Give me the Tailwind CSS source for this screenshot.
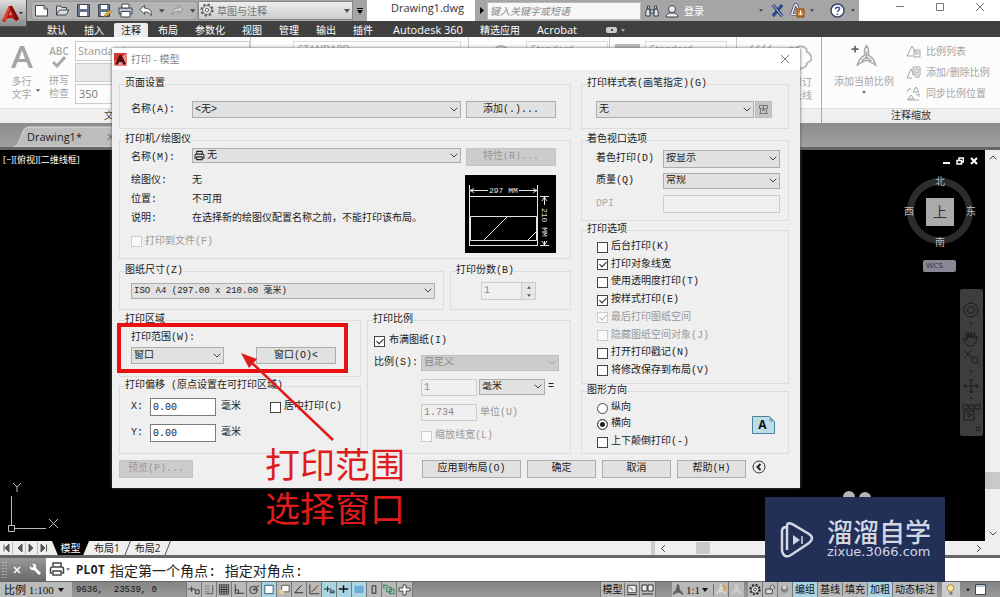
<!DOCTYPE html>
<html lang="zh-CN">
<head>
<meta charset="utf-8">
<title>Drawing1.dwg</title>
<script src="https://cdn.jsdelivr.net/npm/@tailwindcss/browser@4"></script>
</head>
<body class="font-['Open_Sans','Noto_Sans_CJK_SC',sans-serif] text-[10px] leading-3 text-[#222]">
<svg class="hidden" aria-hidden="true">
  <symbol id="chev" viewBox="0 0 8 5"><path d="M.7.7 4 4 7.3.7" fill="none" stroke="currentColor"/></symbol>
  <symbol id="down" viewBox="0 0 6 4"><path d="M0 0h6L3 4z" fill="currentColor"/></symbol>
  <symbol id="printer" viewBox="0 0 16 16"><path d="M4 6V2h8v4M3 12H1.500V8Q1.500 6 3.500 6h9q2 0 2 2v4H13M4 10h8v4H4z" fill="none" stroke="currentColor" stroke-width="1.500"/></symbol>
  <symbol id="compass" viewBox="0 0 40 40"><path d="M20 2c5 6 3 10 3 16 6 3 10 8 12 16-5-3-9-7-15-8-6 1-10 5-15 8 2-8 6-13 12-16 0-6-2-10 3-16zM20 12v9l-8 6M20 21l8 6" fill="none" stroke="currentColor" stroke-width="2.500"/></symbol>
  <symbol id="gear" viewBox="0 0 16 16"><circle cx="8" cy="8" r="6.500" fill="none" stroke="currentColor" stroke-width="2" stroke-dasharray="2.600 2.500"/><circle cx="8" cy="8" r="5" fill="#eee" stroke="currentColor"/><circle cx="8" cy="8" r="2" fill="none" stroke="currentColor"/></symbol>
</svg>

<main class="relative flex min-h-screen flex-col overflow-hidden bg-[#a9a9a9]">
  <!-- Quick access and title bar -->
  <header class="flex h-[21px] items-center bg-[#a5a5a5]">
    <button aria-label="应用程序菜单" class="absolute left-0 top-0 z-10 flex h-[27px] w-[27px] items-center border-r border-b border-[#555] bg-linear-to-b from-[#ddd] to-[#8c8c8c] pl-0.5">
      <svg class="h-[19px] w-[17px]" viewBox="0 0 17 19"><path d="M0 17 7 2h3l7 13-3 2-4-3-5 .5L3 18z" fill="#b5140c"/><path d="M8 2h2l7 13-3 2z" fill="#7d0c08"/><path d="M0 17 7 2l1 3-4 11z" fill="#e0402c"/><path d="m8.500 7 1.500 4-3 .5z" fill="#c98a80"/></svg>
      <svg class="h-1 w-1" viewBox="0 0 6 4"><use href="#down"/></svg>
    </button>
    <div class="ml-[31px] flex h-[19px] w-[167px] items-center gap-[6px] rounded border border-[#999] bg-[#b5b5b5] px-0.5 text-[#3d4654]">
      <button aria-label="新建"><svg class="block size-[15px]" viewBox="0 0 15 15"><path d="M1.500 2.500H10L13.500 6v7h-12z" fill="#fff" stroke="currentColor"/><path d="M10 2.500V6h3.500" fill="none" stroke="currentColor"/></svg></button>
      <button aria-label="打开"><svg class="block size-[15px]" viewBox="0 0 15 15"><path d="M1.500 12V3H6l1 1.500h4.500V7M1.500 12 4.500 7H14l-3 5z" fill="#ddd" stroke="currentColor"/></svg></button>
      <button aria-label="保存"><svg class="block size-[15px]" viewBox="0 0 15 15"><path d="M1.500 1.500h12v12h-12z" fill="#64738c" stroke="currentColor"/><path d="M4 2h7v4H4zM4 9h7v4H4z" fill="#fff"/></svg></button>
      <button aria-label="另存为"><svg class="block size-[15px]" viewBox="0 0 15 15"><path d="M1.500 1.500h11v12h-11z" fill="#64738c" stroke="currentColor"/><path d="M4 2h6v4H4zM4 9h6v4H4z" fill="#fff"/><path d="m7 14 1-3 5-4 1.500 2-5 4z" fill="#e9b23c" stroke="#74520a" stroke-width=".5"/></svg></button>
      <button aria-label="打印"><svg class="block size-[15px]" viewBox="0 0 15 15"><path d="M1 5h13v6H1z" fill="#bcc4d0" stroke="currentColor"/><path d="M4 1h7v4H4zM3 8.500h9V14H3z" fill="#fff" stroke="currentColor"/></svg></button>
      <button aria-label="放弃"><svg class="block size-[14px]" viewBox="0 0 15 15"><path d="M1 6l5-4.500v3c5 0 8 2.500 7 8-2-4-4-4-7-4V11z" fill="#fff" stroke="currentColor"/></svg></button>
      <svg class="h-1 w-1.5"><use href="#down"/></svg>
      <button aria-label="重做"><svg class="block size-[13px] text-[#888]" viewBox="0 0 15 15"><path d="M14 6 9 1.500v3c-5 0-8 2.500-7 8 2-4 4-4 7-4V11z" fill="#ccc" stroke="currentColor"/></svg></button>
      <svg class="h-1 w-1.5"><use href="#down"/></svg>
    </div>
    <div class="relative h-[19px] w-[155px]">
      <select aria-label="工作空间" class="h-full w-full appearance-none border border-[#888] bg-linear-to-b from-[#eee] to-[#ccc] pl-[18px] text-[10px] text-[#777]"><option>草图与注释</option></select>
      <svg class="absolute left-[2px] top-[2px] size-[14px] text-[#555]"><use href="#gear"/></svg>
      <svg class="absolute right-[3px] top-[8px] h-1 w-1.5 text-[#555]"><use href="#down"/></svg>
    </div>
    <div class="flex w-[14px] flex-col items-center gap-px"><span class="h-px w-1.5 bg-black"></span><svg class="h-1 w-1.5 text-black"><use href="#down"/></svg></div>
    <h1 class="h-full w-[108px] bg-white pl-[24px] pt-[2px] text-[11px] text-[#333]">Drawing1.dwg</h1>
    <svg class="ml-[5px] h-[7px] w-1" viewBox="0 0 4 7"><path d="M0 0l4 3.500L0 7z"/></svg>
    <input aria-label="搜索" placeholder="键入关键字或短语" class="ml-[3px] h-[18px] w-[154px] border border-[#bbb] bg-[#f7f7f7] px-0.5 text-[10px] italic placeholder:text-[#8a8a8a]">
    <div class="flex flex-1 items-center pl-[4px] text-[#3b4350]">
      <svg class="size-[14px]" viewBox="0 0 14 14"><path d="M2 5h3v7H.8V8zM9 5h3l1.200 3v4H9zM5 6h4v3H5zM2.500 2h2v3h-2zM9.500 2h2v3h-2z" fill="#dfe3ea" stroke="currentColor"/></svg>
      <svg class="ml-[6px] size-[14px]" viewBox="0 0 14 14"><circle cx="7" cy="5" r="3.500" fill="#eee" stroke="currentColor"/><path d="M1 13c0-3 3-4 6-4s6 1 6 4z" fill="#eee" stroke="currentColor"/></svg>
      <button class="ml-[5px] text-white">登录</button>
      <svg class="ml-auto h-[3px] w-1"><use href="#down"/></svg>
      <svg class="ml-2 size-[13px]" viewBox="0 0 14 14"><path d="M2 1l10 12M12 1 2 13" stroke="#2d4a86" stroke-width="3.500"/><path d="M2 1l10 12" stroke="#c5d4ee"/></svg>
      <svg class="ml-[6px] size-[15px]" viewBox="0 0 15 15"><path d="M1.500 11.500 5 2q1.500-1.500 2 1l1 3M1.500 11.500H6" fill="none" stroke="#3b4350" stroke-width="3"/><path d="M1.500 11.500 5 2q1.500-1.500 2 1l1 3M1.500 11.500H6" fill="none" stroke="#eef" stroke-width="1.500"/><path d="M7 6h7v8H7z" fill="#d17a22" stroke="#8b4a0d"/><path d="M10.500 7.500V12m-2-2 2 2 2-2" fill="none" stroke="#fff"/></svg>
      <svg class="ml-[5px] h-[3px] w-1"><use href="#down"/></svg>
      <svg class="ml-[16px] size-[15px]" viewBox="0 0 15 15"><circle cx="7.500" cy="7.500" r="6.500" fill="#fff" stroke="#394a6b" stroke-width="1.500"/><path d="M5.500 6C5.500 3.500 10 3.500 9.500 6c0 1.500-2 1.500-2 3m0 1.500V12" fill="none" stroke="#2a4f9b" stroke-width="1.500"/></svg>
      <svg class="ml-[6px] mr-[4px] h-[3px] w-1"><use href="#down"/></svg>
    </div>
    <div class="flex h-full w-[141px] items-start justify-between bg-white pl-[36px] pr-[15px] pt-[2px] text-[#777]">
      <button aria-label="最小化"><svg class="size-2.5" viewBox="0 0 10 10"><path d="M1 4.500h8" stroke="currentColor"/></svg></button>
      <button aria-label="最大化"><svg class="size-2.5" viewBox="0 0 10 10"><path d="M1.500 1.500h7v7h-7z" fill="none" stroke="currentColor"/></svg></button>
      <button aria-label="关闭"><svg class="size-2.5" viewBox="0 0 10 10"><path d="m1 1 8 8M9 1 1 9" stroke="currentColor"/></svg></button>
    </div>
  </header>

  <nav class="flex h-[16px] items-center gap-[17px] bg-[#404040] pt-[2px] pl-[47px] text-white">
    <a href="#">默认</a><a href="#">插入</a><a href="#" class="-mx-[7px] h-[14px] rounded-t-xs bg-[#ececec] px-[7px] pt-px text-[#222]">注释</a><a href="#">布局</a><a href="#">参数化</a><a href="#">视图</a><a href="#">管理</a><a href="#">输出</a><a href="#" class="mr-[3px]">插件</a><a href="#" class="text-[11px]">Autodesk 360</a><a href="#">精选应用</a><a href="#" class="text-[11px]">Acrobat</a>
    <button aria-label="显示选项" class="ml-[12px] flex items-center gap-1 text-[#bbb]"><span class="flex h-[6px] w-[11px] items-center justify-center rounded-xs bg-[#ccc]"><span class="size-0.5 bg-[#444]"></span></span><svg class="h-[3px] w-1"><use href="#down"/></svg></button>
  </nav>

  <!-- Ribbon -->
  <section class="flex h-[86px] bg-[#fcfcfc] text-[#a6a6a6]">
    <div class="flex w-[251px] flex-col border-r border-[#ccc]">
      <div class="flex flex-1">
        <button class="relative w-[43px] leading-[13px]"><svg class="mx-auto mb-[6px] block h-6 w-6" viewBox="0 0 24 24"><path d="M1 23 10 1h4l9 22h-4l-2.500-6h-9L5 23zM9 14h6l-3-8.500z" fill="#a5a5a5"/></svg>多行<br>文字<svg class="absolute right-[3px] bottom-[16px] h-[3px] w-1 text-[#555]"><use href="#down"/></svg></button>
        <button class="w-[32px] leading-[13px]"><span class="block pt-[2px] text-[10px] leading-[9px] font-semibold">ABC</span><svg class="mx-auto mb-[6px] h-3 w-3.5" viewBox="0 0 14 12"><path d="m1 6 4 4 8-9" fill="none" stroke="#aaa" stroke-width="3"/></svg>拼写<br>检查</button>
        <div class="flex flex-1 flex-col gap-[2px] pt-1">
          <span class="h-[20px] border border-[#ccc] px-0.5 pt-[3px] text-[11px] text-[#999]">Standard</span>
          <span class="h-[19px] border border-[#ccc] bg-[#e9e9e9]"></span>
          <span class="h-[20px] border border-[#ccc] px-[3px] pt-[3px] text-[11px] text-[#777]">350</span>
        </div>
      </div>
      <p class="h-[15px] border-t border-[#ddd] bg-[#efefef] pl-[104px] text-[#444]">文字</p>
    </div>
    <div class="flex w-[218px] flex-col border-r border-[#ccc]"><div class="flex flex-1 pt-1 pl-[42px]"><span class="h-[20px] w-[168px] border border-[#ddd] pt-px pl-1">STANDARD</span></div><p class="h-[15px] bg-[#efefef]"></p></div>
    <div class="flex w-[141px] flex-col border-r border-[#ccc]"><div class="flex flex-1 gap-[17px] pt-1 pl-[24px]"><span class="mt-1 size-4 rounded-full border-2 border-[#bbb]"></span><span class="h-[20px] w-[82px] border border-[#ddd] pt-px pl-1">Standard</span></div><p class="h-[15px] bg-[#efefef]"></p></div>
    <div class="flex w-[127px] flex-col border-r border-[#ccc]"><div class="flex flex-1 gap-[5px] pt-1 pl-[5px]"><span class="mt-[3px] h-[18px] w-[25px] bg-[#bbb]"></span><span class="h-[20px] w-[82px] border border-[#ddd] pt-px pl-1">Standard</span></div><p class="h-[15px] bg-[#efefef]"></p></div>
    <div class="flex w-[85px] flex-col border-r border-[#aaa]">
      <div class="flex flex-1 justify-end gap-3 pr-[9px]">
        <svg class="mt-[6px] h-6 w-7" viewBox="0 0 28 24"><path d="m2 10 6-8m0 8 6-8m0 8 6-8m0 8 6-8" stroke="#bbb" stroke-width="1.500"/></svg>
        <button class="leading-[13px]"><svg class="mb-[4px] block h-[29px] w-[27px]" viewBox="0 0 27 29"><path d="M4 13C-1 6 7 2 10 7c3-6 12-4 12 2 6 3 6 9 0 11 0 4-7 8-10 3-6 2-10-4-8-10z" fill="none" stroke="#bbb" stroke-width="2"/></svg><span class="block text-right">修订</span><span class="block text-right">云线</span></button>
      </div>
      <p class="h-[15px] border-t border-[#ddd] bg-[#efefef]"></p>
    </div>
    <div class="flex flex-1 flex-col">
      <div class="flex flex-1 items-start">
        <button class="flex w-[84px] flex-col items-center pt-[6px]">
          <svg class="h-[27px] w-[27px] text-[#aaa]" viewBox="0 0 40 40"><use href="#compass" x="5" width="36" height="40"/><path d="M1 9h10M6 4v10" stroke="#666" stroke-width="2.500"/></svg>
          <span class="mt-[5px]">添加当前比例</span><svg class="mt-[4px] h-[3px] w-1 text-[#555]"><use href="#down"/></svg>
        </button>
        <ul class="flex flex-col gap-[7px] pt-[7px]">
          <li><button class="flex h-[14px] items-center gap-[5px] whitespace-nowrap"><svg class="size-[15px]" viewBox="0 0 15 15"><path d="m1 12 5-10 4 7M1 12h6M8 6h6v7H8zM9 8h4M9 10h4" fill="none" stroke="currentColor"/></svg>比例列表</button></li>
          <li><button class="flex h-[14px] items-center gap-[5px] whitespace-nowrap"><svg class="size-[15px]" viewBox="0 0 15 15"><path d="m1 13 4-9 3 6M1 13h5M7 2h7v8H7zM9 4h3v4H9zM9 12h5" fill="none" stroke="currentColor"/></svg>添加/删除比例</button></li>
          <li><button class="flex h-[14px] items-center gap-[5px] whitespace-nowrap"><svg class="size-[15px]" viewBox="0 0 15 15"><path d="m7 6 3-5 3 5zM2 13l3-4 3 4zM1 6l2-3h2M10 9l3-1v3M1 14h12" fill="none" stroke="currentColor"/></svg>同步比例位置</button></li>
        </ul>
      </div>
      <p class="h-[15px] border-t border-[#ddd] bg-[#efefef] text-center text-[#333]">注释缩放</p>
    </div>
  </section>

  <!-- File tabs -->
  <div class="flex h-[27px] items-end border-b-3 border-[#666] bg-linear-to-b from-[#8c8c8c] to-[#a0a0a0] pl-[14px]">
    <div class="relative flex h-[21px] w-[116px] items-center pl-[13px] text-[11px]">
      <svg class="absolute inset-0 h-full w-full" viewBox="0 0 116 21" preserveAspectRatio="none"><path d="M0 21C7 20 7 1 14 1h88c7 0 9 19 14 20z" fill="#bdbdbd" stroke="#ddd"/></svg>
      <a href="#" class="relative">Drawing1*</a><span class="relative ml-[24px] text-[#777]">✕</span>
    </div>
  </div>

  <!-- Drawing area -->
  <section class="flex flex-1">
    <div class="relative flex-1 bg-black text-white">
      <p class="pt-[4px] pl-[3px] text-[9px]">[−][俯视][二维线框]</p>
      <div class="absolute right-[7px] top-[7px] flex gap-[6px]">
        <svg class="size-2" viewBox="0 0 8 8"><path d="M1 5h7v2H1z" fill="#fff"/></svg>
        <svg class="size-2" viewBox="0 0 8 8"><path d="M3 3V1h4.500v4H6M1 3.500h4.500V7H1z" fill="none" stroke="#fff" stroke-width="1.500"/></svg>
        <svg class="size-2" viewBox="0 0 8 8"><path d="m1 1 6 6M7 1 1 7" stroke="#fff" stroke-width="2"/></svg>
      </div>
      <div class="absolute right-[12px] top-[28px] size-[66px] rounded-full border-[7px] border-[#2c2c2c] text-[#bbb]">
        <span class="absolute left-[21px] top-[-10px]">北</span><span class="absolute left-[21px] top-[51px]">南</span>
        <span class="absolute left-[-10px] top-[20px]">西</span><span class="absolute right-[-10px] top-[20px]">东</span>
        <span class="absolute left-[12px] top-[13px] flex size-[28px] items-center justify-center bg-[#aaa] text-[14px] text-[#333]">上</span>
      </div>
      <span class="absolute right-[29px] top-[110px] h-[12px] w-[33px] rounded-xs bg-[#8a8693] pl-[3px] text-[8px] leading-[10px] text-[#2f2c42]">WCS</span>
      <div class="absolute right-[2px] top-[139px] flex h-[147px] w-[23px] flex-col items-center rounded-xs bg-[#3d3d3d] pt-[12px] text-[#1c1c1c]">
        <svg class="h-[130px] w-[19px]" viewBox="0 0 19 130" fill="none" stroke="currentColor"><circle cx="9" cy="9" r="7"/><circle cx="9" cy="9" r="3.500"/><path d="M8 22h2l-1 1zM8 70h2l-1 1zM8 97h2l-1 1z"/><path d="M5 44c-3-3-5-6-3-7l3 3-1-8 2 5V31l2 6 1-6 1 6 3-5-1 6 3-3c0 6-3 10-6 10zM2 49l8 8M10 49l-8 8"/><circle cx="13" cy="59" r="3"/><path d="m15 61 3 3M2 85h14M9 78v14M7 80l2-2 2 2M7 90l2 2 2-2M4 83l-2 2 2 2M14 83l2 2-2 2M1 104h5v4H1zM7 104h5v4H7zM13 104h5v4h-5zM2 110h10v9H2zM6 112l4 2-4 2z"/><circle cx="16" cy="128" r="2"/></svg>
      </div>
      <svg class="absolute bottom-[7px] left-[6px] h-[52px] w-[54px]" viewBox="0 0 54 52" fill="none" stroke="#bbb"><path d="M5.500 43V14M9 46.500h31M2.500 43.500h6v6h-6zM7 1l4 4 4-4M11 5v5M43 37l9 9M52 37l-9 9"/></svg>
      <span class="absolute bottom-[38px] left-[843px] h-3 w-3 rounded-full bg-[#b5b5b5]"></span><span class="absolute bottom-[37px] left-[859px] h-3 w-3 rounded-full bg-[#b5b5b5]"></span>
    </div>
    <div class="flex w-[15px] flex-col items-center bg-[#efefef] pt-[5px] pb-[5px] text-[#444]">
      <svg class="h-[5px] w-2 rotate-180"><use href="#chev"/></svg><span class="mt-auto h-[17px] w-full bg-[#c9c9c9]"></span><svg class="mt-[42px] h-[5px] w-2"><use href="#chev"/></svg>
    </div>
  </section>

  <!-- Layout tabs and horizontal scroll -->
  <div class="flex h-[14px] items-center bg-[#efefef] text-[10px]">
    <div class="flex h-full w-[51px] items-center text-[#555]">
      <svg class="h-3 w-[51px]" viewBox="0 0 51 12"><path d="M4 2.500v7M9 2 5 6l4 4zM22 2l-4 4 4 4zM29 2l4 4-4 4zM41 2l4 4-4 4zM46.500 2.500v7" fill="currentColor" stroke="currentColor"/><path d="M12.500 0v12M25.500 0v12M37.500 0v12" stroke="#bbb"/></svg>
    </div>
    <a href="#" class="relative flex h-full w-[39px] items-center justify-center text-white"><svg class="absolute inset-0 h-full w-full" viewBox="0 0 40 14" preserveAspectRatio="none"><path d="M1 0h38l-6 14H7z"/></svg><span class="relative">模型</span></a>
    <a href="#" class="pl-1">布局1</a>
    <svg class="ml-[3px] h-[14px] w-2" viewBox="0 0 8 14"><path d="M7.500 0 2 14" stroke="#555"/></svg>
    <a href="#" class="pl-1">布局2</a>
    <svg class="ml-[3px] h-[14px] w-2" viewBox="0 0 8 14"><path d="M7.500 0 2 14" stroke="#555"/></svg>
    <div class="ml-auto flex h-full w-[349px] items-center border-l-4 border-[#ccc] text-[#333]">
      <svg class="ml-[4px] h-[5px] w-2 rotate-90"><use href="#chev"/></svg><span class="ml-[29px] h-3 w-[14px] bg-[#c9c9c9]"></span><svg class="mr-[17px] ml-auto h-[5px] w-2 -rotate-90"><use href="#chev"/></svg>
    </div>
  </div>

  <!-- Command line -->
  <div class="flex h-[27px] items-stretch border-t-3 border-b border-[#666] bg-white">
    <div class="flex w-[46px] items-center bg-linear-to-b from-[#999] to-[#686868] text-white">
      <svg class="ml-[2px] h-4 w-1.5" viewBox="0 0 6 16"><path d="M1 0v16M4 0v16" stroke="#ddd" stroke-dasharray="1 2"/></svg>
      <button aria-label="关闭" class="ml-[5px]"><svg class="block size-2" viewBox="0 0 8 8"><path d="m1 1 6 6M7 1 1 7" stroke="#fff" stroke-width="1.500"/></svg></button>
      <button aria-label="自定义" class="ml-[8px]"><svg class="block size-[13px]" viewBox="0 0 13 13"><path d="M3 1c3-1 5 1 4 4l5 5-2 2-5-5C2 8 0 5 1 3l2 2 2-2z" fill="#fff"/></svg></button>
    </div>
    <svg class="mt-[3px] ml-[3px] size-4 text-[#444]"><use href="#printer"/></svg><svg class="mt-[10px] ml-px h-[3px] w-1 text-[#666]"><use href="#down"/></svg>
    <label for="cmd" class="self-center pl-[6px] font-['DejaVu_Sans_Mono'] text-[12px] font-bold">PLOT</label>
    <input id="cmd" value="指定第一个角点: 指定对角点:" class="ml-[5px] min-w-0 flex-1 font-['Liberation_Mono','Noto_Sans_CJK_SC',monospace] text-[14px] text-[#222]">
  </div>

  <!-- Status bar -->
  <footer class="flex h-[15px] items-center overflow-hidden bg-linear-to-b from-[#858585] to-[#999] font-['Liberation_Serif','Noto_Sans_CJK_SC',serif] text-[11px] text-[#111]">
    <button class="flex h-full w-[72px] items-center gap-1 bg-[#bbb] pt-px pl-1 whitespace-nowrap"><span class="text-[11px]">比例 1:100</span><svg class="h-1 w-1.5"><use href="#down"/></svg></button>
    <output class="w-[114px] pl-1 font-['Liberation_Mono'] text-[9px] whitespace-pre">9636,  23539, 0</output>
    <div class="flex h-full divide-x divide-[#777] border-x border-[#777] bg-[#b9b9b9]">
      <svg class="h-full w-[15px]" viewBox="0 0 15 15" fill="none" stroke="#333"><path d="M1 7h8M5 4v6M9 8h4v4H9z"/></svg>
      <svg class="h-full w-[15px]" viewBox="0 0 15 15" fill="none" stroke="#555"><path d="M3 4h6M3 7h6M3 10h6" stroke-dasharray="1 1"/><path d="M11.500 3v9H4"/></svg>
      <svg class="h-full w-[15px]" viewBox="0 0 15 15" fill="none" stroke="#333"><path d="M2.500 2.500h10v10h-10zM5 3v9M7.500 3v9M10 3v9M3 5h9M3 7.500h9M3 10h9"/></svg>
      <svg class="h-full w-[15px]" viewBox="0 0 15 15" fill="none" stroke="#333"><path d="M3.500 2v9.500H13M3 8h4v4"/></svg>
      <svg class="h-full w-[15px]" viewBox="0 0 15 15" fill="none" stroke="#333"><circle cx="7" cy="8" r="4"/><path d="m6 8 7-5M7 8h5"/></svg>
      <svg class="h-full w-[15px] bg-[#a9d5e3]" viewBox="0 0 15 15"><path d="M3 3h9v9H3z" fill="#fff" stroke="#357"/></svg>
      <svg class="h-full w-[15px]" viewBox="0 0 15 15"><path d="M5 3h8v7H5z" fill="#fff" stroke="#555"/><circle cx="5" cy="10" r="2.500" fill="#f2d58c"/></svg>
      <svg class="h-full w-[15px]" viewBox="0 0 15 15" fill="none" stroke="#222"><path d="m10 3-7 8h9"/></svg>
      <svg class="h-full w-[15px]" viewBox="0 0 15 15" fill="none" stroke="#333"><path d="M3 2v10h10M5 10l7-7"/><path d="m8 9 4-6" stroke="#c58a16"/></svg>
      <svg class="h-full w-[15px] bg-[#a9d5e3]" viewBox="0 0 15 15" fill="none" stroke="#222"><path d="M2 7h8M6 4v6M9 9h4v2H9z"/></svg>
      <svg class="h-full w-[15px] bg-[#a9d5e3]" viewBox="0 0 15 15" fill="none" stroke="#111" stroke-width="1.500"><path d="M2 7h10M7 3v8"/></svg>
      <svg class="h-full w-[15px] bg-[#a9d5e3]" viewBox="0 0 15 15"><path d="M2 3h11v9H2z" fill="#6aaed8" stroke="#e7f5ff" stroke-dasharray="1 1"/></svg>
      <svg class="h-full w-[15px]" viewBox="0 0 15 15" fill="none" stroke="#222"><path d="M5.500 3.500h4v8h-4z"/></svg>
      <svg class="h-full w-[15px]" viewBox="0 0 15 15" fill="none" stroke="#285"><path d="M2 2v5M1 3h5M5 5h5v5H5zM8 7h5v5H8z"/></svg>
      <svg class="h-full w-[15px]" viewBox="0 0 15 15"><path d="M6 3h3v3h4v3H9v4H6V9H2V6h4z" fill="#fff" stroke="#444"/></svg>
    </div>
    <div class="ml-auto flex h-full items-center divide-x divide-[#777] border-x border-[#777] bg-[#b9b9b9]">
      <button class="w-[24px] pt-px text-[10px]">模型</button>
      <svg class="h-full w-[15px]" viewBox="0 0 15 15"><path d="M3 3h9v8H3zM5 5l4 4M2 13h11" fill="#eee" stroke="#333"/></svg>
      <svg class="h-full w-[15px]" viewBox="0 0 15 15"><path d="M2 3h5v6H2zM8 3h5v6H8zM2 12h11" fill="#eee" stroke="#333"/></svg>
    </div>
    <div class="ml-[16px] flex h-full items-center divide-x divide-[#777] bg-[#b9b9b9]">
      <button class="flex w-[42px] items-center gap-0.5"><svg class="size-3"><use href="#compass"/></svg>1:1<svg class="h-1 w-1.5"><use href="#down"/></svg></button>
      <svg class="h-full w-[15px] text-[#eee]" viewBox="0 0 15 15"><use href="#compass" x="1" y="1" width="13" height="13"/><path d="m9 2 1.500 2.500L13 5l-2 2 .5 2.500" fill="none" stroke="#d9a33c" stroke-width="1.500"/></svg>
      <svg class="h-full w-[15px] p-px text-[#ddd]"><use href="#compass"/></svg>
    </div>
    <div class="ml-[4px] flex h-full items-center divide-x divide-[#777] bg-[#b9b9b9] text-[10px] whitespace-nowrap">
      <svg class="h-full w-[15px] p-px"><use href="#gear"/></svg>
      <svg class="h-full w-[15px]" viewBox="0 0 15 15"><path d="M3 7h7v5H3zM8 7V4q2-3 4 0v3" fill="#ddd" stroke="#444"/></svg>
      <svg class="h-full w-[15px]" viewBox="0 0 15 15"><circle cx="7" cy="7" r="4" fill="#888"/><circle cx="7" cy="5" r="2" fill="#ddd"/></svg>
      <button class="h-full w-[25px] bg-[#a9d5e3] pt-px">编组</button><button class="w-[25px] pt-px">基线</button><button class="w-[25px] pt-px">填充</button><button class="h-full w-[25px] bg-[#a9d5e3] pt-px">加粗</button><button class="w-[44px] pt-px">动态标注</button>
    </div>
    <svg class="ml-[5px] h-full w-[18px] bg-[#ccc]" viewBox="0 0 19 15"><circle cx="9" cy="6" r="3.500" fill="#ffeaa0" stroke="#a98528"/><path d="M8 10h3v3H8z" fill="#777"/></svg>
    <svg class="ml-[6px] h-1 w-1"><use href="#down"/></svg>
    <svg class="mr-[13px] ml-[4px] h-full w-[13px]" viewBox="0 0 13 15"><path d="M1.500 2.500h10v10h-10z" fill="#fff" stroke="#444"/><path d="M2 4h9" stroke="#68a"/></svg>
  </footer>

  <!-- Plot dialog -->
  <form role="dialog" aria-label="打印 - 模型" onsubmit="return false" class="absolute left-[112px] top-[48px] w-[688px] bg-[#efefef] font-['Liberation_Mono','Noto_Sans_CJK_SC',monospace] text-[10px] leading-3 text-[#222] shadow-[0_0_3px_#555]">
    <header class="flex h-[22px] items-center bg-white px-[2px] font-['Open_Sans','Noto_Sans_CJK_SC',sans-serif] text-[#888]">
      <svg class="size-[13px]" viewBox="0 0 13 13"><path d="M0 0h13v13H0z" fill="#e58a86"/><path d="M0 0h13L0 9z" fill="#cf3a36"/><path d="M1 11 5.500 2h2L12 11l-2.500 1-1.500-3H5l-1.500 3z" fill="#520b0b"/></svg>
      <h2 class="ml-[4px]">打印 - 模型</h2>
      <button type="button" aria-label="关闭" class="mr-[8px] ml-auto"><svg class="block size-[10px]" viewBox="0 0 10 10"><path d="m1 1 8 8M9 1 1 9" stroke="#777"/></svg></button>
    </header>

    <div class="flex gap-[10px] pt-[8px] pr-[11px] pl-[7px]">
      <div class="flex flex-1 flex-col">
        <fieldset class="min-w-0 border border-[#dcdcdc] px-[5px]">
          <legend>页面设置</legend>
          <div class="flex items-center pt-[11px] pr-[9px] pb-[10px] pl-[6px]">
            <label for="page" class="w-[61px]">名称(A):</label>
            <div class="relative flex-1"><select id="page" class="block h-[17px] w-full appearance-none border border-[#adadad] bg-[#e1e1e1] px-0.5"><option>&lt;无&gt;</option></select><svg class="pointer-events-none absolute top-[6px] right-[3px] h-[5px] w-2 text-[#444]"><use href="#chev"/></svg></div>
            <button class="ml-[5px] h-[17px] w-[90px] border border-[#adadad] bg-[#e1e1e1]">添加(.)...</button>
          </div>
        </fieldset>

        <fieldset class="mt-[5px] min-w-0 border border-[#dcdcdc] px-[5px]">
          <legend>打印机/绘图仪</legend>
          <div class="pt-[2px] pr-[9px] pb-[5px] pl-[6px]">
            <div class="flex h-[18px] items-start">
              <label for="plotter" class="w-[61px] pt-[4px]">名称(M):</label>
              <div class="relative flex-1"><select id="plotter" class="block h-[15px] w-full appearance-none border border-[#adadad] bg-[#e1e1e1] pl-[14px]"><option>无</option></select><svg class="pointer-events-none absolute top-[2px] left-[2px] size-[11px]"><use href="#printer"/></svg><svg class="pointer-events-none absolute top-[5px] right-[3px] h-[5px] w-2 text-[#444]"><use href="#chev"/></svg></div>
              <button disabled class="ml-[5px] h-[18px] w-[90px] border border-[#c4c4c4] bg-[#cccccc] text-[#999]">特性(R)...</button>
            </div>
            <div class="flex justify-between">
              <div class="pt-[5px]">
                <dl class="grid grid-cols-[61px_auto] leading-[19px]"><dt>绘图仪:</dt><dd>无</dd><dt>位置:</dt><dd>不可用</dd><dt>说明:</dt><dd class="whitespace-nowrap">在选择新的绘图仪配置名称之前，不能打印该布局。</dd></dl>
                <label class="mt-[4px] flex h-[19px] items-center gap-[3px] text-[#999]"><input type="checkbox" disabled class="size-[11px] appearance-none border border-[#ccc] bg-[#f9f9f9]">打印到文件(F)</label>
              </div>
              <svg class="mt-[9px] h-[78px] w-[91px] bg-black" viewBox="0 0 91 78" fill="none" stroke="#e6e6e6"><path d="M4.500 10v60M72.500 10v60M4 21.500h69M4 70.500h69M5 15.500h18M54 15.500h18M75 21.500h9M75 70.500h9M79.500 22v8M79.500 66v4M77 26l2.500-4 2.500 4M77 66l2.500 4 2.500-4M9 13.500l-4 2 4 2M68 13.500l4 2-4 2M5.500 41.500h66v24h-66zM19 65l23-23M63 65l8-8"/><g fill="#e6e6e6" stroke="none" font-family="Liberation Mono" font-size="8"><text x="24" y="18">297 MM</text><text x="33" y="-77" transform="rotate(90)">210 MM</text></g></svg>
            </div>
          </div>
        </fieldset>

        <div class="mt-[6px] flex gap-[6px]">
          <fieldset class="min-w-0 flex-1 border border-[#dcdcdc] px-[5px]">
            <legend>图纸尺寸(Z)</legend>
            <div class="relative mt-[6px] mr-[3px] mb-[10px] ml-[6px]"><select aria-label="图纸尺寸" class="block h-4 w-full appearance-none border border-[#adadad] bg-[#e1e1e1] px-0.5 text-[9px]"><option>ISO A4 (297.00 x 210.00 毫米)</option></select><svg class="pointer-events-none absolute top-[5px] right-[3px] h-[5px] w-2 text-[#444]"><use href="#chev"/></svg></div>
          </fieldset>
          <fieldset class="w-[121px] border border-[#dcdcdc] px-[5px]">
            <legend>打印份数(B)</legend>
            <div class="mt-[5px] mb-[9px] ml-[25px] flex h-[18px] w-[55px] border border-[#ccc]"><input aria-label="打印份数" value="1" disabled class="min-w-0 flex-1 px-0.5 text-[#888]"><div class="flex w-[14px] flex-col items-center justify-around border-l border-[#ccc] bg-[#e6e6e6] text-[#555]"><svg class="h-[3px] w-1 rotate-180"><use href="#down"/></svg><svg class="h-[3px] w-1"><use href="#down"/></svg></div></div>
          </fieldset>
        </div>

        <div class="mt-[4px] flex gap-[6px]">
          <div class="flex-1">
            <fieldset class="min-w-0 border border-[#dcdcdc] px-[5px]">
              <legend>打印区域</legend>
              <div class="pt-[6px] pr-[19px] pb-[12px] pl-[6px]">
                <label for="area" class="block">打印范围(W):</label>
                <div class="mt-[3px] flex justify-between">
                  <div class="relative w-[93px]"><select id="area" class="block h-[17px] w-full appearance-none border border-[#adadad] bg-[#e1e1e1] px-0.5"><option>窗口</option></select><svg class="pointer-events-none absolute top-[6px] right-[3px] h-[5px] w-2 text-[#444]"><use href="#chev"/></svg></div>
                  <button class="h-[17px] w-[80px] border border-[#adadad] bg-[#e1e1e1]">窗口(O)&lt;</button>
                </div>
              </div>
            </fieldset>
            <fieldset class="mt-[3px] min-w-0 border border-[#dcdcdc] px-[5px]">
              <legend class="whitespace-nowrap">打印偏移 (原点设置在可打印区域)</legend>
              <div class="flex gap-[29px] pt-[6px] pb-[11px] pl-[6px]">
                <div class="flex flex-col gap-[8px]">
                  <div class="flex items-center"><label for="ox" class="w-[19px]">X:</label><input id="ox" value="0.00" class="h-[18px] w-[66px] border border-[#7a7a7a] bg-white px-0.5"><span class="ml-[5px]">毫米</span></div>
                  <div class="flex items-center"><label for="oy" class="w-[19px]">Y:</label><input id="oy" value="0.00" class="h-[18px] w-[66px] border border-[#7a7a7a] bg-white px-0.5"><span class="ml-[5px]">毫米</span></div>
                </div>
                <label class="flex h-[18px] items-center gap-[3px] whitespace-nowrap"><input type="checkbox" class="size-[11px] appearance-none border border-[#444] bg-white">居中打印(C)</label>
              </div>
            </fieldset>
          </div>
          <fieldset class="w-[204px] border border-[#dcdcdc] px-[5px]">
            <legend>打印比例</legend>
            <div class="pt-[9px] pr-[6px] pb-[11px] pl-px">
              <label class="flex h-3 items-center gap-[4px]"><input type="checkbox" checked class="relative size-[11px] appearance-none border border-[#444] bg-white checked:before:absolute checked:before:top-0 checked:before:left-[3px] checked:before:h-[7px] checked:before:w-[4px] checked:before:rotate-45 checked:before:border-r checked:before:border-b checked:before:border-[#222] checked:before:content-['']">布满图纸(I)</label>
              <div class="mt-[8px] flex items-center"><label for="scale" class="w-[47px] whitespace-nowrap">比例(S):</label><div class="relative flex-1"><select id="scale" disabled class="block h-4 w-full appearance-none border border-[#bfbfbf] bg-[#cccccc] px-0.5 text-[#888]"><option>自定义</option></select><svg class="pointer-events-none absolute top-[5px] right-[3px] h-[5px] w-2 text-[#aaa]"><use href="#chev"/></svg></div></div>
              <div class="mt-[8px] flex h-[17px] items-start pl-[47px]"><input aria-label="图纸单位数" value="1" disabled class="h-[17px] w-[56px] border border-[#ccc] px-0.5 text-[#888]"><div class="relative ml-[2px] w-[66px]"><select aria-label="单位" class="block h-4 w-full appearance-none border border-[#adadad] bg-[#e1e1e1] px-0.5"><option>毫米</option></select><svg class="pointer-events-none absolute top-[5px] right-[3px] h-[5px] w-2 text-[#444]"><use href="#chev"/></svg></div><span class="ml-[3px] pt-[2px]">=</span></div>
              <div class="mt-[8px] flex items-center pl-[47px] text-[#999]"><input id="unit" value="1.734" disabled class="h-[17px] w-[56px] border border-[#ccc] px-0.5 text-[#888]"><label for="unit" class="ml-[3px]">单位(U)</label></div>
              <label class="mt-[9px] flex h-3 items-center gap-[3px] pl-[47px] text-[#999]"><input type="checkbox" disabled class="size-[11px] appearance-none border border-[#ccc] bg-[#f9f9f9]">缩放线宽(L)</label>
            </div>
          </fieldset>
        </div>
      </div>

      <div class="w-[208px]">
        <fieldset class="min-w-0 border border-[#dcdcdc] px-[5px]">
          <legend>打印样式表(画笔指定)(G)</legend>
          <div class="flex pt-[11px] pr-[11px] pb-[10px] pl-[9px]">
            <div class="relative flex-1"><select aria-label="打印样式表" class="block h-[17px] w-full appearance-none border border-[#adadad] bg-[#e1e1e1] px-0.5"><option>无</option></select><svg class="pointer-events-none absolute top-[6px] right-[3px] h-[5px] w-2 text-[#444]"><use href="#chev"/></svg></div>
            <button disabled aria-label="编辑" class="ml-px flex h-[17px] w-[17px] items-center justify-center border border-[#bbb] bg-[#c6c6c6]"><svg class="size-[11px]" viewBox="0 0 11 11"><path d="M1.500 1.500h8v3h-8zM2.500 4.500v5h6v-5M4 6.500h3M1 9.500h9M5.500 2v5" fill="none" stroke="#777"/></svg></button>
          </div>
        </fieldset>
        <fieldset class="mt-[5px] min-w-0 border border-[#dcdcdc] px-[5px]">
          <legend>着色视口选项</legend>
          <div class="pt-[4px] pr-[3px] pb-[7px] pl-[9px]">
            <div class="flex items-center"><label for="shade" class="w-[67px]">着色打印(D)</label><div class="relative flex-1"><select id="shade" class="block h-[18px] w-full appearance-none border border-[#adadad] bg-[#e1e1e1] px-0.5"><option>按显示</option></select><svg class="pointer-events-none absolute top-[6px] right-[3px] h-[5px] w-2 text-[#444]"><use href="#chev"/></svg></div></div>
            <div class="mt-[5px] flex items-center"><label for="quality" class="w-[67px]">质量(Q)</label><div class="relative flex-1"><select id="quality" class="block h-4 w-full appearance-none border border-[#adadad] bg-[#e1e1e1] px-0.5"><option>常规</option></select><svg class="pointer-events-none absolute top-[5px] right-[3px] h-[5px] w-2 text-[#444]"><use href="#chev"/></svg></div></div>
            <div class="mt-[6px] flex items-center text-[#aaa]"><label for="dpi" class="w-[67px]">DPI</label><input id="dpi" disabled class="h-[18px] min-w-0 flex-1 border border-[#ccc]"></div>
          </div>
        </fieldset>
        <fieldset class="mt-[3px] min-w-0 border border-[#dcdcdc] px-[5px]">
          <legend>打印选项</legend>
          <div class="mt-[5px] mb-[6px] ml-[10px] flex h-[136px] flex-col justify-between *:flex *:h-3 *:items-center *:gap-[3px]">
            <label><input type="checkbox" class="size-[11px] appearance-none border border-[#444] bg-white">后台打印(K)</label>
            <label><input type="checkbox" checked class="relative size-[11px] appearance-none border border-[#444] bg-white checked:before:absolute checked:before:top-0 checked:before:left-[3px] checked:before:h-[7px] checked:before:w-[4px] checked:before:rotate-45 checked:before:border-r checked:before:border-b checked:before:border-[#222] checked:before:content-['']">打印对象线宽</label>
            <label><input type="checkbox" class="size-[11px] appearance-none border border-[#444] bg-white">使用透明度打印(T)</label>
            <label><input type="checkbox" checked class="relative size-[11px] appearance-none border border-[#444] bg-white checked:before:absolute checked:before:top-0 checked:before:left-[3px] checked:before:h-[7px] checked:before:w-[4px] checked:before:rotate-45 checked:before:border-r checked:before:border-b checked:before:border-[#222] checked:before:content-['']">按样式打印(E)</label>
            <label class="text-[#999]"><input type="checkbox" checked disabled class="relative size-[11px] appearance-none border border-[#ccc] bg-[#f9f9f9] checked:before:absolute checked:before:top-0 checked:before:left-[3px] checked:before:h-[7px] checked:before:w-[4px] checked:before:rotate-45 checked:before:border-r checked:before:border-b checked:before:border-[#bbb] checked:before:content-['']">最后打印图纸空间</label>
            <label class="text-[#999]"><input type="checkbox" disabled class="size-[11px] appearance-none border border-[#ccc] bg-[#f9f9f9]">隐藏图纸空间对象(J)</label>
            <label><input type="checkbox" class="size-[11px] appearance-none border border-[#444] bg-white">打开打印戳记(N)</label>
            <label><input type="checkbox" class="size-[11px] appearance-none border border-[#444] bg-white">将修改保存到布局(V)</label>
          </div>
        </fieldset>
        <fieldset class="mt-px min-w-0 border border-[#dcdcdc] px-[5px]">
          <legend>图形方向</legend>
          <div class="flex items-center justify-between pt-[5px] pr-[8px] pb-[5px] pl-[10px]">
            <div>
              <label class="flex h-3 items-center gap-[3px]"><input type="radio" name="dir" class="size-[11px] appearance-none rounded-full border border-[#444] bg-white">纵向</label>
              <label class="mt-[4px] flex h-3 items-center gap-[3px]"><input type="radio" name="dir" checked class="size-[11px] appearance-none rounded-full border border-[#444] bg-[#222] ring-2 ring-white ring-inset">横向</label>
              <label class="mt-[6px] flex h-3 items-center gap-[3px]"><input type="checkbox" class="size-[11px] appearance-none border border-[#444] bg-white">上下颠倒打印(-)</label>
            </div>
            <div class="relative h-[18px] w-[23px] text-center font-['Open_Sans'] text-[12px] leading-[18px] font-bold text-[#111]"><svg class="absolute inset-0 h-full w-full" viewBox="0 0 23 18"><path d="M.5.500h17l5 5v12H.5z" fill="#bfdde8" stroke="#4d8199"/><path d="M17.500.500v5h5z" fill="#6fa3bb"/></svg><span class="relative pr-[2px]">A</span></div>
          </div>
        </fieldset>
      </div>
    </div>

    <footer class="flex items-center gap-[6px] pt-[6px] pr-[34px] pb-[10px] pl-[7px]">
      <button disabled class="mr-auto h-[18px] w-[74px] border border-[#c4c4c4] bg-[#cccccc] text-[#999]">预览(P)...</button>
      <button class="h-[18px] w-[99px] border border-[#adadad] bg-[#e1e1e1]">应用到布局(O)</button>
      <button class="h-[18px] w-[69px] border border-[#adadad] bg-[#e1e1e1]">确定</button>
      <button class="h-[18px] w-[69px] border border-[#adadad] bg-[#e1e1e1]">取消</button>
      <button class="h-[18px] w-[69px] border border-[#adadad] bg-[#e1e1e1]">帮助(H)</button>
      <button type="button" aria-label="收起" class="mb-1"><svg class="block size-[14px]" viewBox="0 0 14 14"><circle cx="7" cy="7" r="6" fill="#eee" stroke="#333"/><path d="M8.500 4 5.500 7l3 3" fill="none" stroke="#222" stroke-width="2"/></svg></button>
    </footer>
  </form>

  <!-- Callout -->
  <div class="pointer-events-none absolute left-[117px] top-[323px] h-[50px] w-[231px] border-4 border-[#e81010]"></div>
  <svg class="pointer-events-none absolute left-[240px] top-[351px] h-[92px] w-[96px]" viewBox="0 0 96 92"><path d="M10 10 93 89" stroke="#e01b1b" stroke-width="2.500"/><path d="m1 2 16 6-8 9z" fill="#e01b1b"/></svg>
  <p class="pointer-events-none absolute left-[265px] top-[441px] font-['Noto_Sans_CJK_SC'] text-[35px] leading-[44px] text-[#e01b1b]">打印范围<br>选择窗口</p>

  <!-- Watermark -->
  <aside class="absolute right-[55px] bottom-[15px] flex h-[85px] w-[180px] items-center gap-[13px] bg-[#223058] pl-[15px] text-[#d3d7e2]">
    <svg class="h-[36px] w-[34px]" viewBox="0 0 34 36" fill="none" stroke="currentColor" stroke-width="2.500"><path d="M7 28V4q0-4 5-2l17 10q6 4 0 9L11 33q-7 4-9-4V9q0-4 5-4"/><path d="m13 13 7 5-7 5z" fill="currentColor" stroke="none"/><path d="M22 14v8" stroke-width="1.500"/></svg>
    <div class="pb-1"><p class="font-['Noto_Sans_CJK_SC'] text-[26px] leading-[26px] font-medium">溜溜自学</p><p class="mt-[2px] font-['DejaVu_Sans'] text-[13px] leading-3">zixue.3066.com</p></div>
  </aside>
</main>
</body>
</html>
